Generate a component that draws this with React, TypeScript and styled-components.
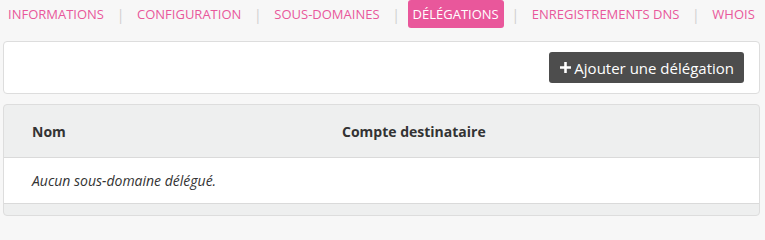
import React from 'react';
import styled, { createGlobalStyle } from 'styled-components';

const tabs = [
  { label: 'Informations' },
  { label: 'Configuration' },
  { label: 'Sous-domaines' },
  { label: 'Délégations', active: true },
  { label: 'Enregistrements DNS' },
  { label: 'Whois' },
];

function App() {
  return (
    <>
      <GlobalStyle />
      <Page>
        <TabBar>
          {tabs.map((tab, i) => (
            <React.Fragment key={tab.label}>
              {i > 0 && <Separator>|</Separator>}
              <TabLink $active={tab.active}>{tab.label}</TabLink>
            </React.Fragment>
          ))}
        </TabBar>
        <ToolbarCard>
          <AddButton>
            <PlusIcon viewBox='0 0 12 12'>
              <path d='M4.6 0h2.8v4.6H12v2.8H7.4V12H4.6V7.4H0V4.6h4.6z' fill='currentColor' />
            </PlusIcon>
            Ajouter une délégation
          </AddButton>
        </ToolbarCard>
        <TableCard>
          <HeaderRow>
            <HeaderCell $width='310px'>Nom</HeaderCell>
            <HeaderCell>Compte destinataire</HeaderCell>
          </HeaderRow>
          <BodyRow>
            <EmptyText>Aucun sous-domaine délégué.</EmptyText>
          </BodyRow>
          <TableFooter />
        </TableCard>
      </Page>
    </>
  );
}

export default App;

const GlobalStyle = createGlobalStyle`
  html, body {
    margin: 0;
    padding: 0;
    background: #f7f7f7;
    font-family: 'Open Sans', 'Noto Sans', sans-serif;
  }
`;

const Page = styled.div`
  padding: 0 5px 0 3px;
  display: flex;
  flex-direction: column;
`;

const TabBar = styled.nav`
  display: flex;
  align-items: center;
  height: 28px;
`;

const TabLink = styled.a<{ $active?: boolean }>`
  display: flex;
  align-items: center;
  height: 28px;
  padding: 0 5px;
  border-radius: 3px;
  font-size: 13px;
  text-transform: uppercase;
  white-space: nowrap;
  color: ${props => (props.$active ? '#ffffff' : '#e9579b')};
  background-color: ${props => (props.$active ? '#e9579b' : 'transparent')};
  cursor: pointer;
`;

const Separator = styled.span`
  width: 23px;
  text-align: center;
  font-size: 14px;
  color: #cfcfcf;
`;

const ToolbarCard = styled.section`
  margin-top: 13px;
  background: #ffffff;
  border: 1px solid #dddddd;
  border-radius: 4px;
  padding: 10px 15px 10px;
  display: flex;
  justify-content: flex-end;
`;

const AddButton = styled.button`
  display: flex;
  align-items: center;
  gap: 3px;
  height: 31px;
  padding: 0 10px 0 11px;
  border: none;
  border-radius: 3px;
  background: #4d4d4d;
  color: #ffffff;
  font-family: 'Open Sans', 'Noto Sans', sans-serif;
  font-size: 15px;
  cursor: pointer;
`;

const PlusIcon = styled.svg`
  width: 11px;
  height: 11px;
`;

const TableCard = styled.section`
  margin-top: 10px;
  border: 1px solid #dddddd;
  border-radius: 4px;
  background: #eeefef;
  overflow: hidden;
`;

const HeaderRow = styled.div`
  display: flex;
  align-items: center;
  height: 52px;
  border-bottom: 1px solid #dadada;
  padding-left: 28px;
`;

const HeaderCell = styled.div<{ $width?: string }>`
  width: ${props => props.$width || 'auto'};
  font-size: 14px;
  font-weight: 700;
  color: #333333;
`;

const BodyRow = styled.div`
  display: flex;
  align-items: center;
  height: 45px;
  background: #ffffff;
  border-bottom: 1px solid #dadada;
  padding-left: 28px;
`;

const EmptyText = styled.em`
  font-size: 14px;
  color: #333333;
`;

const TableFooter = styled.div`
  height: 11px;
`;
